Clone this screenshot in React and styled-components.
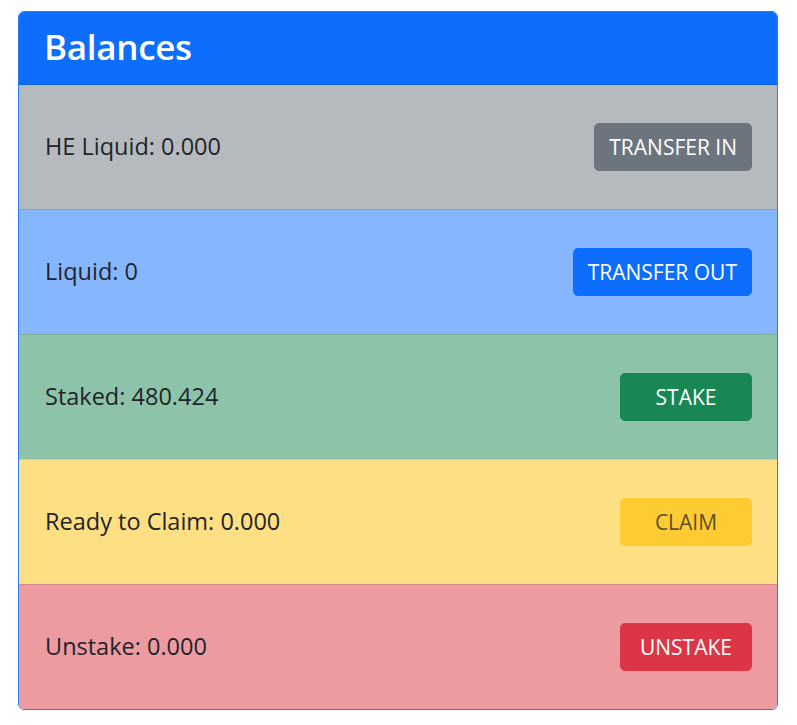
import * as React from "react";
import styled, { createGlobalStyle } from "styled-components";

const rows = [
  { label: "HE Liquid: 0.000", action: "TRANSFER IN", tone: "secondary" },
  { label: "Liquid: 0", action: "TRANSFER OUT", tone: "primary" },
  { label: "Staked: 480.424", action: "STAKE", tone: "success" },
  { label: "Ready to Claim: 0.000", action: "CLAIM", tone: "warning", disabled: true },
  { label: "Unstake: 0.000", action: "UNSTAKE", tone: "danger" },
];

const tones = {
  secondary: { row: "#b5babe", btn: "#6c757d", text: "#fff" },
  primary: { row: "#86b7fe", btn: "#0d6efd", text: "#fff" },
  success: { row: "#8cc3a9", btn: "#198754", text: "#fff" },
  warning: { row: "#ffdf83", btn: "#ffc107", text: "#000" },
  danger: { row: "#ed9aa1", btn: "#dc3545", text: "#fff" },
};

const App = () => {
  return (
    <>
      <GlobalStyle />
      <Page>
        <Card>
          <Header>
            <Title>Balances</Title>
          </Header>
          {rows.map((r) => (
            <Row key={r.action} tone={r.tone}>
              <Label>{r.label}</Label>
              <Button tone={r.tone} disabled={r.disabled}>
                {r.action}
              </Button>
            </Row>
          ))}
        </Card>
      </Page>
    </>
  );
};

export default App;

const GlobalStyle = createGlobalStyle`
  body {
    margin: 0;
    background: #fff;
    font-family: "Open Sans", "Noto Sans", sans-serif;
    color: #212529;
  }
`;

const Page = styled.div`
  padding: 11px 19px 0 18px;
`;

const Card = styled.div`
  display: flex;
  flex-direction: column;
  border: 1px solid #2f7cf2;
  border-radius: 6px;
  overflow: hidden;
`;

const Header = styled.div`
  background: #0d6efd;
  height: 72px;
  display: flex;
  align-items: center;
  padding: 0 25px;
  border-bottom: 1px solid rgba(0, 0, 0, 0.12);
`;

const Title = styled.h3`
  margin: 0 0 3px;
  color: #fff;
  font-size: 35px;
  font-weight: 600;
  letter-spacing: -0.3px;
`;

const Row = styled.div`
  display: flex;
  align-items: center;
  justify-content: space-between;
  height: 124px;
  padding: 0 25px 0 26px;
  background: ${(p) => tones[p.tone].row};
  & + & {
    border-top: 1px solid rgba(0, 0, 0, 0.1);
  }
`;

const Label = styled.span`
  font-size: 23.5px;
  color: #212529;
  margin-bottom: 3px;
`;

const Button = styled.button`
  min-width: 132px;
  height: 48px;
  padding: 0 14px;
  border: 1px solid ${(p) => tones[p.tone].btn};
  border-radius: 5px;
  background: ${(p) => tones[p.tone].btn};
  color: ${(p) => tones[p.tone].text};
  font-family: "Open Sans", "Noto Sans", sans-serif;
  font-size: 21px;
  &:disabled {
    opacity: 0.65;
  }
`;
